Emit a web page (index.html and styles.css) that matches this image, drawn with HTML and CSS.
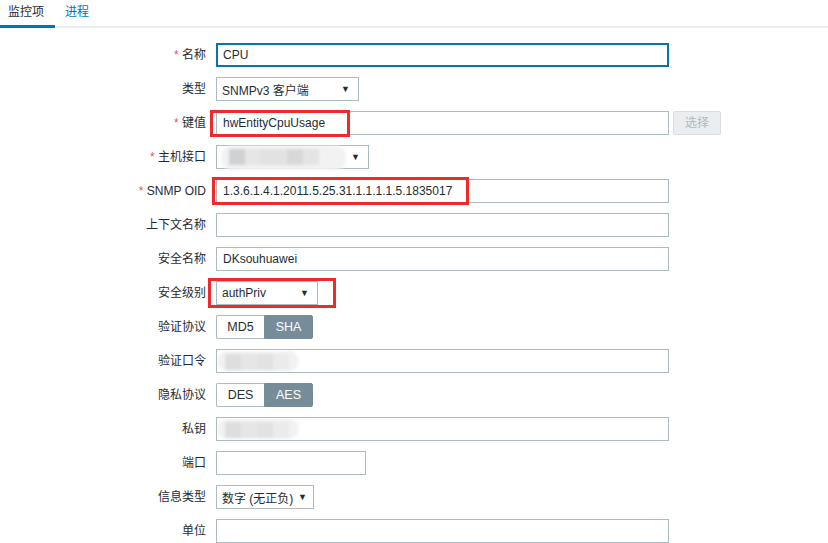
FILE: index.html
```html
<!DOCTYPE html>
<html>
<head>
<meta charset="utf-8">
<link rel="stylesheet" href="styles.css">
</head>
<body>
<div class="tabs">
  <div class="tab active">监控项</div>
  <div class="tab">进程</div>
</div>
<div class="form">
  <div class="label"><span class="req">*</span> 名称</div>
  <div class="ctl"><div class="input wide focus">CPU</div></div>

  <div class="label">类型</div>
  <div class="ctl"><div class="select w143"><span>SNMPv3 客户端</span><span class="arrow">▼</span></div></div>

  <div class="label"><span class="req">*</span> 键值</div>
  <div class="ctl row-flex">
    <div class="input wide">hwEntityCpuUsage</div>
    <div class="btn-disabled">选择</div>
    <div class="mark mark-key"></div>
  </div>

  <div class="label"><span class="req">*</span> 主机接口</div>
  <div class="ctl"><div class="select w153"><div class="blur blur-host"><i></i><i></i><i></i><i></i><i></i></div><span class="arrow">▼</span></div></div>

  <div class="label"><span class="req">*</span> SNMP OID</div>
  <div class="ctl">
    <div class="input wide">1.3.6.1.4.1.2011.5.25.31.1.1.1.1.5.1835017</div>
    <div class="mark mark-oid"></div>
  </div>

  <div class="label">上下文名称</div>
  <div class="ctl"><div class="input wide"></div></div>

  <div class="label">安全名称</div>
  <div class="ctl"><div class="input wide">DKsouhuawei</div></div>

  <div class="label">安全级别</div>
  <div class="ctl">
    <div class="select w102"><span>authPriv</span><span class="arrow">▼</span></div>
    <div class="mark mark-level"></div>
  </div>

  <div class="label">验证协议</div>
  <div class="ctl"><div class="seg"><div class="seg-item">MD5</div><div class="seg-item on">SHA</div></div></div>

  <div class="label">验证口令</div>
  <div class="ctl"><div class="input wide"><div class="blur blur-pass"><i></i><i></i><i></i><i></i></div></div></div>

  <div class="label">隐私协议</div>
  <div class="ctl"><div class="seg"><div class="seg-item">DES</div><div class="seg-item on">AES</div></div></div>

  <div class="label">私钥</div>
  <div class="ctl"><div class="input wide"><div class="blur blur-pass"><i></i><i></i><i></i><i></i></div></div></div>

  <div class="label">端口</div>
  <div class="ctl"><div class="input w150"></div></div>

  <div class="label">信息类型</div>
  <div class="ctl"><div class="select w98"><span>数字 (无正负)</span><span class="arrow">▼</span></div></div>

  <div class="label">单位</div>
  <div class="ctl"><div class="input wide"></div></div>
</div>
</body>
</html>
```
FILE: styles.css
```css
* { box-sizing: border-box; }
html, body { margin: 0; padding: 0; background: #fff; }
body {
  font-family: "Liberation Sans", Arial, "Noto Sans CJK SC", sans-serif;
  font-size: 12px;
  color: #1f2c33;
  width: 828px;
  height: 543px;
  overflow: hidden;
}
.tabs {
  display: flex;
  height: 28px;
  border-bottom: 2px solid #ebeef0;
  padding-left: 0;
}
.tab {
  padding: 5px 10px 0 8px;
  height: 28px;
  line-height: 14px;
  color: #0275b8;
}
.tab.active {
  color: #1f2c33;
  width: 55px;
  border-bottom: 3px solid #0275b8;
  margin-bottom: -2px;
}
.tab + .tab { padding-left: 10px; }
.form {
  display: grid;
  grid-template-columns: 206px 1fr;
  column-gap: 10px;
  row-gap: 10px;
  padding-top: 15px;
}
.label {
  height: 24px;
  line-height: 24px;
  text-align: right;
  white-space: nowrap;
}
.req { color: #e4584e; }
.ctl {
  position: relative;
  height: 24px;
  display: flex;
  align-items: center;
}
.row-flex { gap: 4px; }
.input {
  height: 24px;
  border: 1px solid #acbbc0;
  padding: 0 6px;
  line-height: 22px;
  background: #fff;
  position: relative;
  overflow: hidden;
  white-space: nowrap;
}
.input.wide { width: 453px; }
.input.w150 { width: 150px; }
.input.focus { border: 2px solid #0275b8; padding: 0 5px; line-height: 20px; }
.select {
  height: 24px;
  border: 1px solid #acbbc0;
  padding: 0 8px 0 5px;
  display: flex;
  align-items: center;
  justify-content: space-between;
  white-space: nowrap;
  position: relative;
  background: #fff;
}
.w143 { width: 143px; }
.w153 { width: 153px; }
.w102 { width: 102px; }
.w98 { width: 98px; padding-right: 6px; }
.arrow { font-size: 9px; color: #1f2c33; margin-left: auto; position: relative; }
.btn-disabled {
  width: 48px;
  height: 24px;
  border: 1px solid #d7dde0;
  border-radius: 2px;
  background: #ebeef0;
  color: #acbbc0;
  text-align: center;
  line-height: 22px;
}
.seg { display: flex; height: 24px; }
.seg-item {
  width: 48px;
  height: 24px;
  line-height: 22px;
  text-align: center;
  border: 1px solid #acbbc0;
  background: #fff;
  color: #1f2c33;
  font-size: 12.5px;
}
.seg-item:first-child { border-radius: 2px 0 0 2px; border-right: none; }
.seg-item.on {
  background: #768d99;
  border-color: #768d99;
  color: #fff;
  border-radius: 0 2px 2px 0;
  width: 49px;
}
.mark {
  position: absolute;
  border: 3px solid #ee2a2a;
  pointer-events: none;
}
.mark-key { left: -6px; top: -1px; width: 140px; height: 27px; }
.mark-oid { left: -4px; top: -2px; width: 257px; height: 28px; }
.mark-level { left: -8px; top: -3px; width: 128px; height: 30px; }
.blur {
  position: absolute;
  top: 1px;
  display: flex;
  filter: blur(1.5px);
  border-radius: 10px;
  background: #f2f2f2;
}
.blur i { display: block; height: 16px; margin-top: 3px; }
.blur-host { left: 4px; width: 125px; height: 24px; padding-left: 8px; top: 0; }
.blur-host i:nth-child(1) { width: 16px; background: #cfd2d4; }
.blur-host i:nth-child(2) { width: 14px; background: #e6e6e6; }
.blur-host i:nth-child(3) { width: 28px; background: #e2e2e2; }
.blur-host i:nth-child(4) { width: 16px; background: #d8d8d8; }
.blur-host i:nth-child(5) { width: 16px; background: #e4e4e4; }
.blur-pass { left: 0px; width: 82px; height: 20px; padding-left: 8px; }
.blur-pass i:nth-child(1) { width: 16px; background: #dedede; }
.blur-pass i:nth-child(2) { width: 16px; background: #e6e6e6; }
.blur-pass i:nth-child(3) { width: 16px; background: #e2e2e2; }
.blur-pass i:nth-child(4) { width: 16px; background: #ebebeb; }
```
